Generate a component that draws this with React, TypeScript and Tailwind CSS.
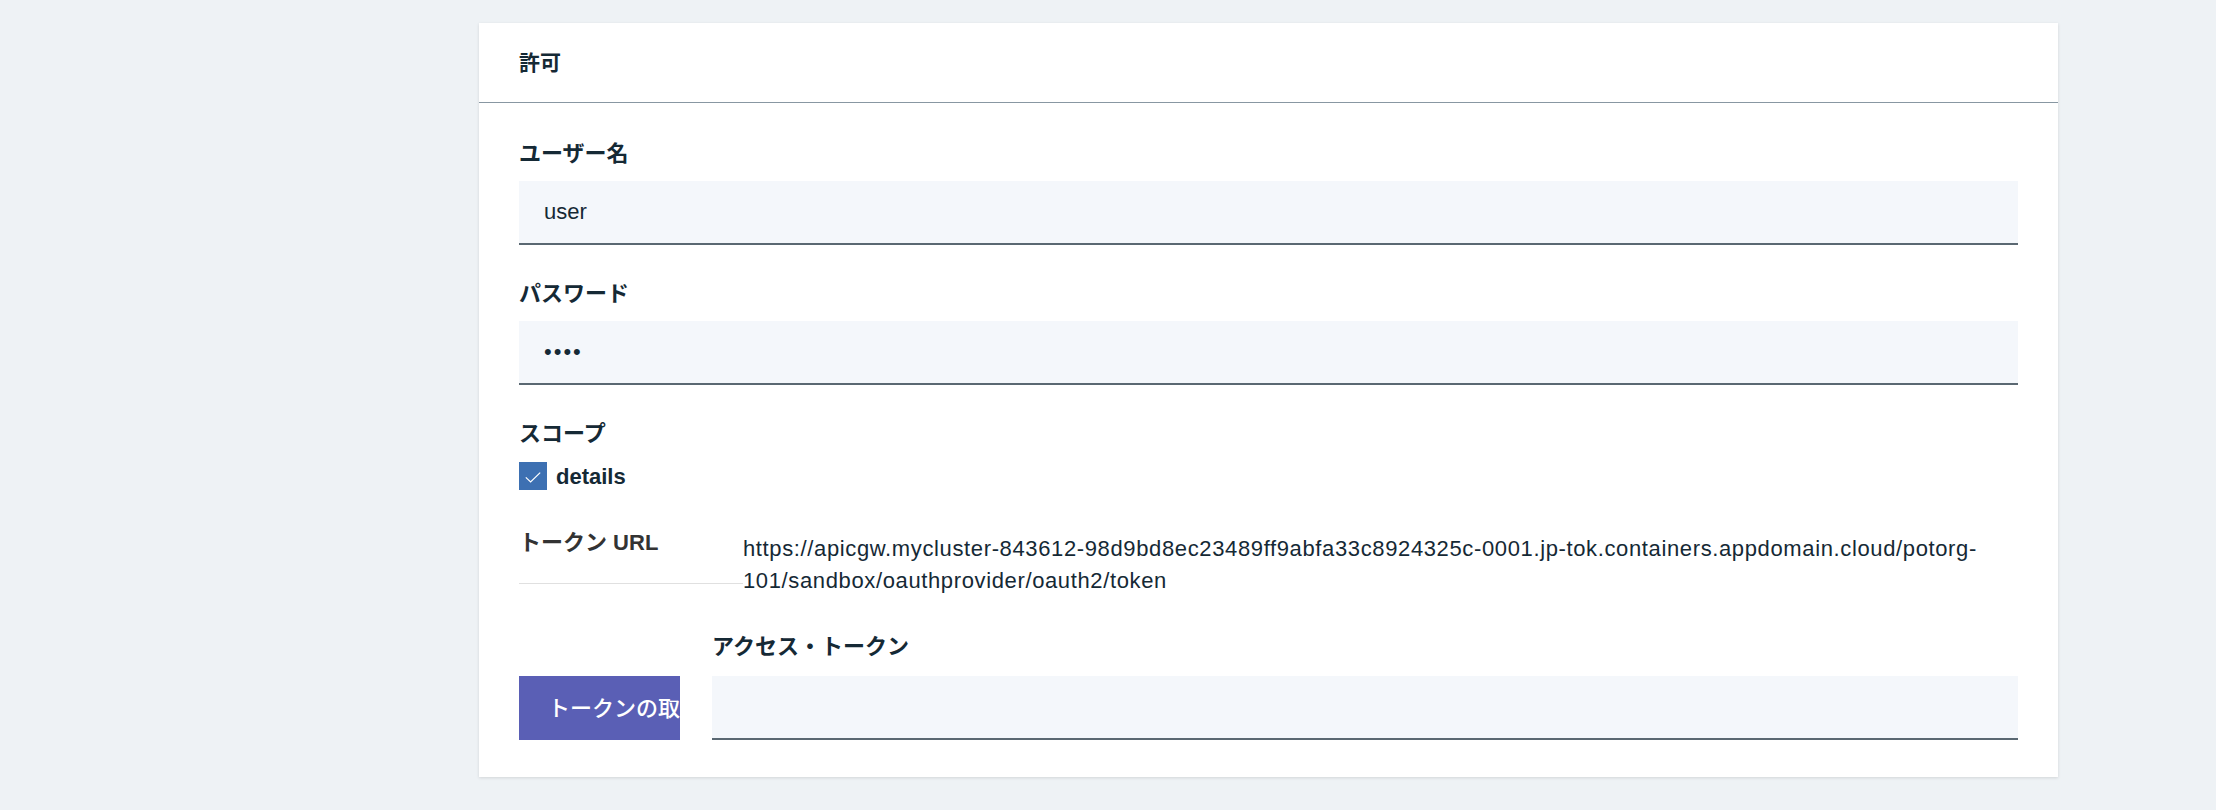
import { useState } from 'react'

const font = "[font-family:'Liberation_Sans','Noto_Sans_CJK_JP',sans-serif]"

function Label({ children, className = '' }: { children: React.ReactNode; className?: string }) {
  return (
    <label className={`block text-[22px] leading-[24px] font-bold text-[#152935] ${className}`}>
      {children}
    </label>
  )
}

function TextInput({ value, type = 'text', className = '' }: { value: string; type?: string; className?: string }) {
  return (
    <input
      type={type}
      defaultValue={value}
      className={`block h-[64px] w-full bg-[#f4f7fb] border-0 border-b-2 border-[#5a6872] px-[25px] text-[22px] text-[#152935] outline-none ${font} ${className}`}
    />
  )
}

export default function App() {
  const [checked, setChecked] = useState(true)

  return (
    <div className={`min-h-[810px] bg-[#eef2f5] pl-[479px] pt-[23px] ${font}`}>
      <div className="w-[1579px] bg-white shadow-[0_1px_3px_rgba(0,0,0,0.12)]">
        {/* header */}
        <div className="h-[80px] flex items-center px-[40px] border-b border-[#8897a2]">
          <h2 className="text-[21px] font-semibold text-[#152935]">許可</h2>
        </div>

        <div className="px-[40px] pt-[39px] pb-[37px]">
          {/* username */}
          <Label className="mb-[15px]">ユーザー名</Label>
          <TextInput value="user" />

          {/* password */}
          <Label className="mt-[37px] mb-[15px]">パスワード</Label>
          <TextInput value="pass" type="password" className="tracking-[2px]" />

          {/* scope */}
          <Label className="mt-[37px] mb-[16px]">スコープ</Label>
          <button onClick={() => setChecked(!checked)} className="flex items-center gap-[9px] h-[28px]">
            <span className="w-[28px] h-[28px] bg-[#3d70b2] flex items-center justify-center">
              {checked && (
                <svg width="16" height="11" viewBox="0 0 16 11" fill="none" className="mt-[2px]">
                  <path d="M0.8 5.4 L5.6 10 L15.2 0.6" stroke="white" strokeWidth="1.2" />
                </svg>
              )}
            </span>
            <span className="text-[22px] font-semibold text-[#152935]">details</span>
          </button>

          {/* token url */}
          <div className="mt-[37px] flex items-start">
            <div className="w-[224px] shrink-0 border-b border-[#e0e0e0] pb-[24px] text-[22px] leading-[32px] font-bold text-[#333333]">
              トークン URL
            </div>
            <div className="pt-[6px] text-[22px] leading-[32px] tracking-[0.63px] text-[#152935]">
              <span className="block whitespace-nowrap">
                https://apicgw.mycluster-843612-98d9bd8ec23489ff9abfa33c8924325c-0001.jp-tok.containers.appdomain.cloud/potorg-
              </span>
              <span className="block whitespace-nowrap">101/sandbox/oauthprovider/oauth2/token</span>
            </div>
          </div>

          {/* access token */}
          <div className="mt-[38px] flex items-end gap-[32px]">
            <button className="w-[161px] h-[64px] shrink-0 overflow-hidden bg-[#5a5fb5] pl-[29px] text-left">
              <span className="whitespace-nowrap text-[22px] font-medium text-white">トークンの取得</span>
            </button>
            <div className="flex-1">
              <Label className="mb-[17px]">アクセス・トークン</Label>
              <TextInput value="" />
            </div>
          </div>
        </div>
      </div>
    </div>
  )
}
